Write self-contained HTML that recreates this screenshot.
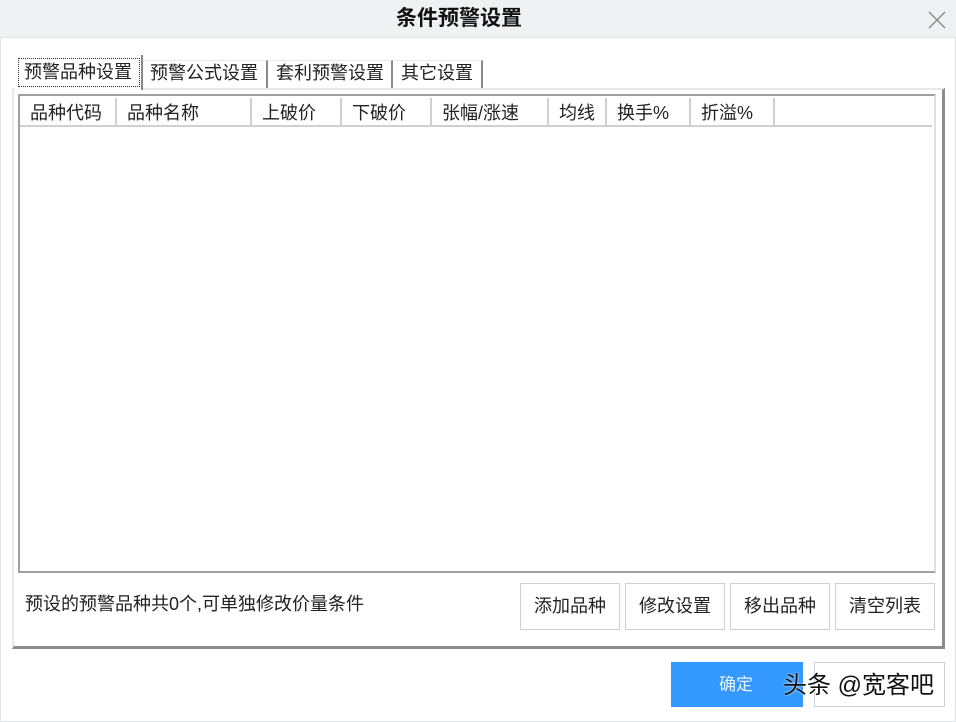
<!DOCTYPE html>
<html><head><meta charset="utf-8"><style>
*{margin:0;padding:0;box-sizing:border-box}
body{width:956px;height:722px;background:#fff;position:relative;overflow:hidden;font-family:"Liberation Sans","Noto Sans CJK SC",sans-serif;font-size:18px;color:#222}
.a{position:absolute}
.title{left:0;top:0;width:956px;height:38px;background:#f0f1f3;border-bottom:1px solid #e2e3e6}
.title span{position:absolute;left:396px;top:5px;font-size:21px;font-weight:bold;color:#111;line-height:28px}
.tab{position:absolute;height:28px;top:60px;border-left:1px solid #fff;border-right:2px solid #8a8a8a;border-top:1px solid #e8e8e8;font-size:18px;line-height:24px;padding:0 0 0 5px;background:#fff;white-space:nowrap}
.btn{position:absolute;border:1px solid #cfd0d4;background:#fff;font-size:18px;text-align:center;line-height:45px;height:47px;top:583px;width:100px}
.col{position:absolute;top:98px;height:29px;border-right:2px solid #d0d0d0;border-bottom:2px solid #d0d0d0;font-size:18px;line-height:30px;padding:0 0 0 10px;white-space:nowrap}
</style></head><body>
<div class="a" style="left:0;top:0;width:956px;height:722px;border:1px solid #e2e3e6"></div>
<div class="a title"><span>条件预警设置</span>
<svg class="a" style="left:928px;top:11px" width="18" height="18"><path d="M1 1L17 17M17 1L1 17" stroke="#888" stroke-width="1.4"/></svg></div>
<div class="a" style="left:12px;top:88px;width:933px;height:561px;border-left:2px solid #e8e8e8;border-top:2px solid #e8e8e8;border-right:3px solid #8c8c8c;border-bottom:3px solid #8c8c8c"></div>
<div class="a" style="left:15px;top:55px;width:128px;height:35px;background:#fff;border-right:2px solid #8a8a8a"></div>
<div class="a" style="left:18px;top:58px;width:122px;height:29px;border:1px dotted #333;font-size:18px;line-height:26px;padding:0 0 0 5px;white-space:nowrap">预警品种设置</div>
<div class="tab" style="left:144px;width:124px">预警公式设置</div>
<div class="tab" style="left:270px;width:123px">套利预警设置</div>
<div class="tab" style="left:395px;width:88px">其它设置</div>
<div class="a" style="left:18px;top:94px;width:918px;height:479px;border:2px solid #a0a0a0;border-right-color:#e0e0e0;border-bottom-color:#a0a0a0"></div>
<div class="col" style="left:20px;width:97px">品种代码</div>
<div class="col" style="left:117px;width:135px">品种名称</div>
<div class="col" style="left:252px;width:90px">上破价</div>
<div class="col" style="left:342px;width:90px">下破价</div>
<div class="col" style="left:432px;width:117px">张幅/涨速</div>
<div class="col" style="left:549px;width:58px">均线</div>
<div class="col" style="left:607px;width:84px">换手%</div>
<div class="col" style="left:691px;width:84px">折溢%</div>
<div class="col" style="left:775px;width:157px;border-right:none"></div>
<div class="a" style="left:25px;top:591px;font-size:18px;line-height:26px;white-space:nowrap">预设的预警品种共0个,可单独修改价量条件</div>
<div class="btn" style="left:520px">添加品种</div>
<div class="btn" style="left:625px">修改设置</div>
<div class="btn" style="left:730px">移出品种</div>
<div class="btn" style="left:835px">清空列表</div>
<div class="a" style="left:671px;top:662px;width:132px;height:45px;background:#3399ff;color:#e8f2ff;font-size:17px;line-height:45px"><span style="position:absolute;left:48px">确定</span></div>
<div class="a" style="left:814px;top:662px;width:131px;height:45px;border:1px solid #cfd0d4;background:#fff"></div>
<div class="a" style="left:783px;top:671px;font-size:24px;line-height:30px;color:#111;white-space:nowrap;text-shadow:0 0 2px #fff">头条 @宽客吧</div>
</body></html>
